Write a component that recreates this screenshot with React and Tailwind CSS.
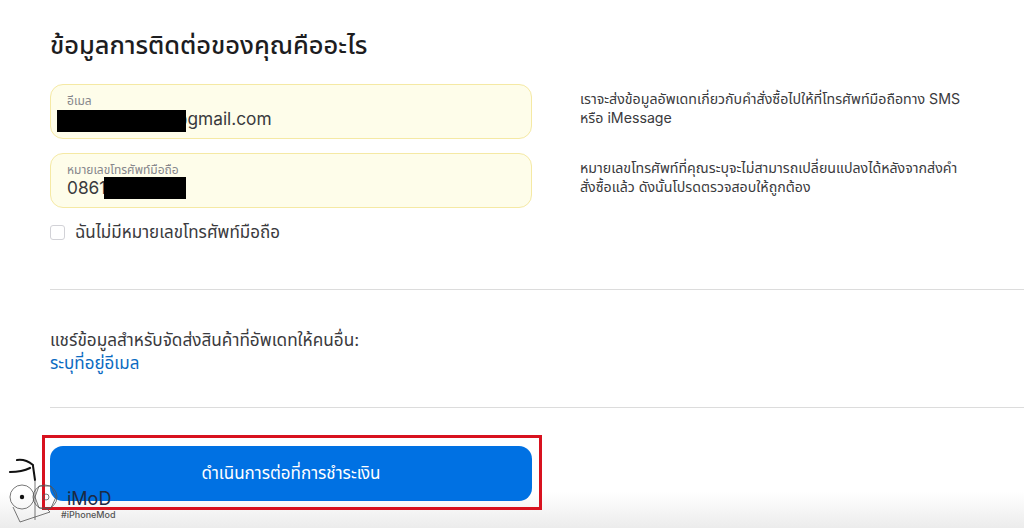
import React from "react";

const FONT = "font-['Inter','Noto_Sans','Noto_Sans_Thai','Liberation_Sans',sans-serif]";

const Field = ({ label, value, maskClass }) => (
  <div className="relative h-[55px] w-[482px] rounded-[13px] border border-[#f5e9a4] bg-[#fefdea] pl-[16px] pt-[9px]">
    <p className="text-[12px] leading-[14px] text-[#86868b]">{label}</p>
    <p className="text-[17.3px] leading-[22px] text-[#3a3a3d]">{value}</p>
    <div className={`absolute bg-black ${maskClass}`} />
  </div>
);

const Note = ({ children }) => (
  <p className="w-[390px] text-[14.2px] leading-[18.5px] text-[#3a3a3d]">{children}</p>
);

const Watermark = () => (
  <div className="absolute left-[8px] top-[457px] h-[71px] w-[115px]">
    <svg width="60" height="68" viewBox="0 0 60 68" fill="none" stroke="#555" strokeWidth="0.8">
      <path d="M9 3 C15 2 20 4 25 8" stroke="#111" strokeWidth="2.2" strokeLinecap="round" />
      <path d="M2 15 C9 15 16 14 22 11" stroke="#111" strokeWidth="2.2" strokeLinecap="round" />
      <path d="M25 9 L27 23" stroke="#111" strokeWidth="2" strokeLinecap="round" />
      <circle cx="14" cy="40" r="12" />
      <circle cx="14" cy="40" r="2.2" fill="#111" stroke="none" />
      <path d="M27 23 L27 63 M5 50 L12 65 L42 55 L38 51" />
      <circle cx="37" cy="40" r="12" />
      <path d="M31 29 L43 29 L48 40 L43 51 L31 51 L27 40 Z" />
      <circle cx="38" cy="40" r="3" />
    </svg>
    <p className="absolute left-[59px] top-[32px] text-[18px] leading-[19px] text-[#1c2a44]">iMoD</p>
    <p className="absolute left-[53px] top-[52px] whitespace-nowrap text-[9px] font-medium leading-[11px] text-[#555]">#iPhoneMod</p>
  </div>
);

export default function App() {
  return (
    <div className={`relative h-[528px] w-[1024px] overflow-hidden bg-white pl-[50px] pt-[30px] ${FONT}`}>
      <div className="absolute inset-x-0 bottom-0 h-[36px] bg-gradient-to-b from-white to-[#ececec]" />

      <div className="relative">
        <h1 className="text-[25.4px] font-medium leading-[30px] text-[#1d1d1f]">ข้อมูลการติดต่อของคุณคืออะไร</h1>

        <div className="mt-[24px] flex flex-col gap-[14px]">
          <div className="flex">
            <Field label="อีเมล" value="xxxxxxxxxxx@gmail.com" maskClass="left-[6px] top-[25px] h-[22px] w-[129px]" />
            <div className="ml-[48px] pt-[6px]">
              <Note>เราจะส่งข้อมูลอัพเดทเกี่ยวกับคำสั่งซื้อไปให้ที่โทรศัพท์มือถือทาง SMS หรือ iMessage</Note>
            </div>
          </div>
          <div className="flex">
            <Field label="หมายเลขโทรศัพท์มือถือ" value="0861234567" maskClass="left-[53px] top-[23px] h-[22px] w-[82px]" />
            <div className="ml-[48px] pt-[6px]">
              <Note>หมายเลขโทรศัพท์ที่คุณระบุจะไม่สามารถเปลี่ยนแปลงได้หลังจากส่งคำสั่งซื้อแล้ว ดังนั้นโปรดตรวจสอบให้ถูกต้อง</Note>
            </div>
          </div>
        </div>

        <label className="mt-[13px] flex items-center gap-[10px]">
          <span className="h-[15px] w-[15px] rounded-[3px] border border-[#d2d2d7] bg-white" />
          <span className="text-[17px] leading-[22px] text-[#3a3a3d]">ฉันไม่มีหมายเลขโทรศัพท์มือถือ</span>
        </label>

        <hr className="mt-[46px] border-t border-[#dcdcdc]" />

        <div className="pt-[38px]">
          <p className="text-[17.2px] leading-[23px] text-[#3a3a3d]">แชร์ข้อมูลสำหรับจัดส่งสินค้าที่อัพเดทให้คนอื่น:</p>
          <p className="text-[17px] leading-[24px] text-[#0b6bc2]">ระบุที่อยู่อีเมล</p>
        </div>

        <hr className="mt-[32px] border-t border-[#dcdcdc]" />

        <button className="mt-[38px] h-[55px] w-[482px] rounded-[13px] bg-[#0071e3] text-[17px] text-white">
          ดำเนินการต่อที่การชำระเงิน
        </button>
      </div>

      <div className="absolute left-[42px] top-[435px] h-[75px] w-[500px] border-[3px] border-[#d8121f]" />
      <Watermark />
    </div>
  );
}
